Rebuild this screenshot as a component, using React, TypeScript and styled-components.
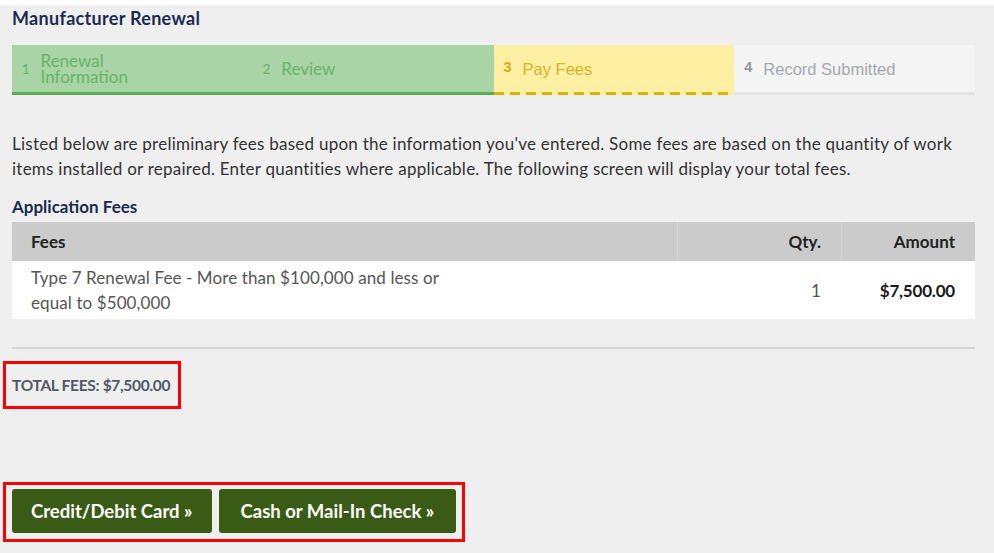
import React from "react";
import styled, { createGlobalStyle, css } from "styled-components";

const GlobalStyle = createGlobalStyle`
  html, body { margin: 0; padding: 0; background: #efefef; }
  body { font-family: Lato, "Open Sans", sans-serif; }
  * { box-sizing: border-box; }
`;

const Page = styled.div`
  border-top: 5px solid #ffffff;
  background: #efefef;
  width: 994px;
  height: 553px;
  padding: 0 19px 0 12px;
  overflow: hidden;
`;

const Title = styled.h1`
  margin: 3px 0 0;
  font-size: 18px;
  line-height: 21px;
  font-weight: 700;
  color: #1b2c50;
  letter-spacing: 0.3px;
`;

const Stepper = styled.div`
  margin-top: 16px;
  display: grid;
  grid-template-columns: repeat(4, 1fr);
  height: 50px;
`;

type StepState = "done" | "current" | "todo";

const stepColors: Record<StepState, { bg: string; fg: string; num: string }> = {
  done: { bg: "#a8d4a6", fg: "#68b368", num: "#68b368" },
  current: { bg: "#fdf0a3", fg: "#dbb22a", num: "#d6aa1a" },
  todo: { bg: "#f4f4f4", fg: "#a4a8ae", num: "#969696" },
};

const Step = styled.div<{ $state: StepState }>`
  position: relative;
  display: flex;
  align-items: center;
  gap: 11px;
  padding: 0 10px 3px;
  background: ${(p) => stepColors[p.$state].bg};
  font-family: ${(p) =>
    p.$state === "done" ? 'Lato, sans-serif' : '"Liberation Sans", Arial, sans-serif'};
  ${(p) =>
    p.$state === "done" &&
    css`
      border-bottom: 3px solid #5aab56;
      padding-bottom: 0;
    `}
  ${(p) =>
    p.$state === "todo" &&
    css`
      border-bottom: 3px solid #e3e3e3;
      padding-bottom: 0;
    `}
  ${(p) =>
    p.$state === "current" &&
    css`
      &::after {
        content: "";
        position: absolute;
        left: 0;
        right: 0;
        bottom: 0;
        height: 3px;
        background: repeating-linear-gradient(
          to right,
          #e2b100 0 10px,
          transparent 10px 16px
        );
      }
    `}
`;

const StepNum = styled.span<{ $state: StepState }>`
  font-size: ${(p) => (p.$state === "done" ? "13px" : "14.5px")};
  font-weight: ${(p) => (p.$state === "done" ? 400 : 700)};
  color: ${(p) => stepColors[p.$state].num};
  margin-top: ${(p) => (p.$state === "done" ? "0" : "-4px")};
`;

const StepLabel = styled.span<{ $state: StepState }>`
  font-size: ${(p) => (p.$state === "done" ? "17px" : "16.5px")};
  line-height: 16px;
  max-width: 100px;
  color: ${(p) => stepColors[p.$state].fg};
  white-space: ${(p) => (p.$state === "done" ? "normal" : "nowrap")};
`;

const Intro = styled.p`
  margin: 36px 0 0;
  font-size: 17px;
  line-height: 25px;
  letter-spacing: 0.25px;
  color: #333333;
`;

const SectionTitle = styled.h2`
  margin: 16px 0 0;
  font-size: 17px;
  line-height: 20px;
  font-weight: 700;
  color: #1b2c50;
`;

const Table = styled.div`
  margin-top: 5px;
  display: grid;
  grid-template-columns: 665px 164px 1fr;
`;

const HeadCell = styled.div<{ $align?: "left" | "right"; $first?: boolean }>`
  background: #cbcbcb;
  height: 39px;
  display: flex;
  align-items: center;
  justify-content: ${(p) => (p.$align === "right" ? "flex-end" : "flex-start")};
  padding: 0 20px 0 19px;
  font-size: 17px;
  font-weight: 700;
  color: #222222;
  border-left: ${(p) => (p.$first ? "none" : "1px solid #d5d5d5")};
`;

const BodyCell = styled.div<{ $align?: "left" | "right"; $bold?: boolean }>`
  background: #ffffff;
  min-height: 58px;
  display: flex;
  align-items: center;
  justify-content: ${(p) => (p.$align === "right" ? "flex-end" : "flex-start")};
  padding: 4px 20px 4px 19px;
  font-size: 17px;
  line-height: 25px;
  letter-spacing: ${(p) => (p.$bold ? "-0.2px" : "0.1px")};
  font-weight: ${(p) => (p.$bold ? 700 : 400)};
  color: ${(p) => (p.$bold ? "#1a1a1a" : "#555555")};
`;

const Description = styled.span`
  max-width: 440px;
`;

const Divider = styled.hr`
  margin: 28px 0 0;
  border: none;
  height: 2px;
  background: #d5d5d5;
`;

const Highlight = styled.div`
  display: inline-flex;
  margin-left: -9px;
  border: 3px solid #ff0000;
`;

const TotalBox = styled(Highlight)`
  margin-top: 12px;
  padding: 0 8px 0 6px;
  height: 48px;
  align-items: center;
`;

const TotalText = styled.span`
  font-size: 15.5px;
  font-weight: 700;
  color: #4f5968;
  letter-spacing: -0.3px;
`;

const ButtonBox = styled(Highlight)`
  margin-top: 73px;
  padding: 4px 6px 6px;
  gap: 7px;
`;

const ActionButton = styled.button<{ $pad: number }>`
  height: 44px;
  padding: 0 ${(p) => p.$pad}px;
  border: none;
  border-radius: 3px;
  background: #3a5b15;
  color: #ffffff;
  font-family: Lato, sans-serif;
  font-size: 18.5px;
  font-weight: 700;
  cursor: pointer;
`;

const steps: { n: number; label: string; state: StepState }[] = [
  { n: 1, label: "Renewal Information", state: "done" },
  { n: 2, label: "Review", state: "done" },
  { n: 3, label: "Pay Fees", state: "current" },
  { n: 4, label: "Record Submitted", state: "todo" },
];

export default function App() {
  return (
    <>
      <GlobalStyle />
      <Page>
        <Title>Manufacturer Renewal</Title>
        <Stepper>
          {steps.map((s) => (
            <Step key={s.n} $state={s.state}>
              <StepNum $state={s.state}>{s.n}</StepNum>
              <StepLabel $state={s.state}>{s.label}</StepLabel>
            </Step>
          ))}
        </Stepper>
        <Intro>
          Listed below are preliminary fees based upon the information you've entered. Some fees are
          based on the quantity of work items installed or repaired. Enter quantities where
          applicable. The following screen will display your total fees.
        </Intro>
        <SectionTitle>Application Fees</SectionTitle>
        <Table>
          <HeadCell $first>Fees</HeadCell>
          <HeadCell $align="right">Qty.</HeadCell>
          <HeadCell $align="right">Amount</HeadCell>
          <BodyCell>
            <Description>
              Type 7 Renewal Fee - More than $100,000 and less or equal to $500,000
            </Description>
          </BodyCell>
          <BodyCell $align="right">1</BodyCell>
          <BodyCell $align="right" $bold>
            $7,500.00
          </BodyCell>
        </Table>
        <Divider />
        <div>
          <TotalBox>
            <TotalText>TOTAL FEES: $7,500.00</TotalText>
          </TotalBox>
        </div>
        <div>
          <ButtonBox>
            <ActionButton $pad={19}>Credit/Debit Card »</ActionButton>
            <ActionButton $pad={22}>Cash or Mail-In Check »</ActionButton>
          </ButtonBox>
        </div>
      </Page>
    </>
  );
}
